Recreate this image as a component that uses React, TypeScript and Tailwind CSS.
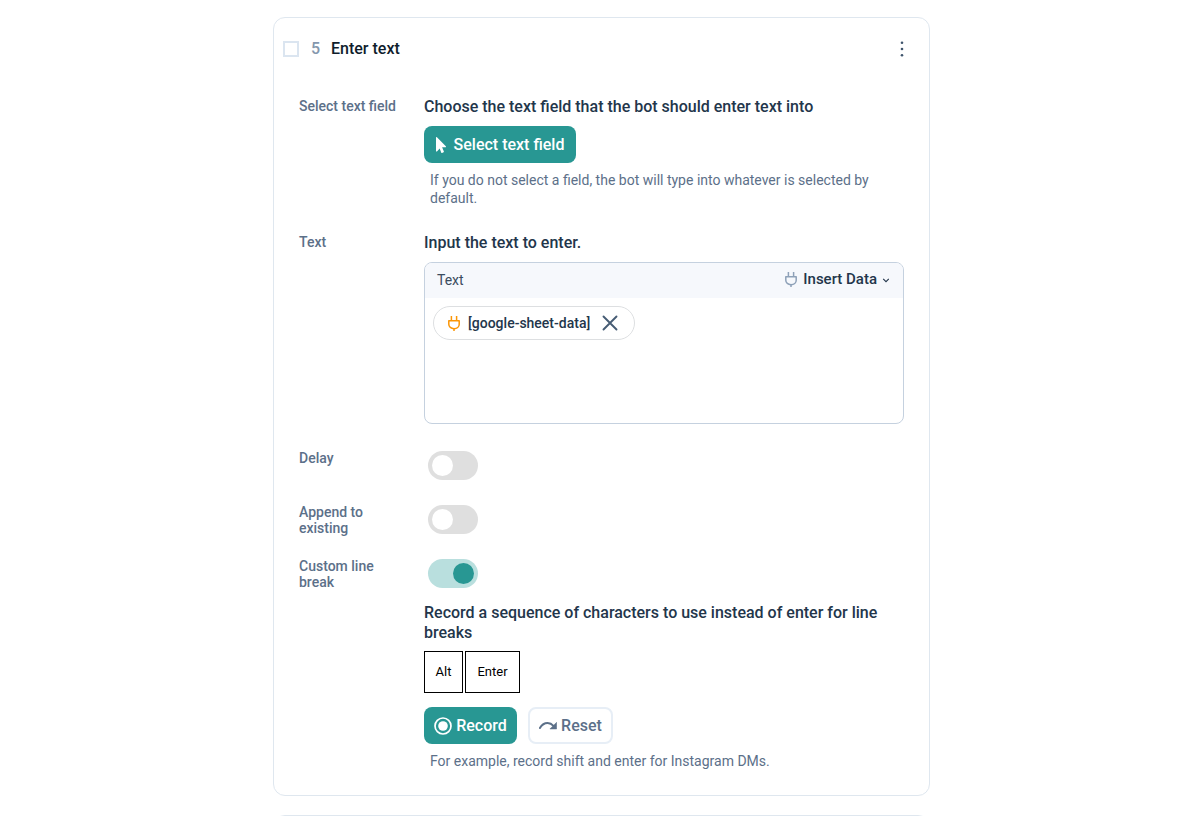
import type { ReactNode } from "react";
import { FaMousePointer } from "react-icons/fa";

function PlugIcon({ className }: { className: string }) {
  return (
    <svg
      className={className}
      width="12"
      height="15"
      viewBox="0 0 12 15"
      fill="none"
      stroke="currentColor"
      strokeWidth="1.5"
      aria-hidden="true"
    >
      <path d="M3.4 0v4.8M8.6 0v4.8" />
      <path d="M.8 4.8h10.4v3.4c0 2.6-2.2 4.5-5.2 4.5S.8 10.8.8 8.2z" strokeLinejoin="round" />
      <path d="M6 12.6V15" />
    </svg>
  );
}

function Row({ label, htmlFor, children }: { label: string; htmlFor: string; children: ReactNode }) {
  return (
    <div className="grid grid-cols-[125px_minmax(0,1fr)]">
      <label htmlFor={htmlFor} className="pt-px pr-5 text-sm leading-4 font-medium text-[#5c7089]">
        {label}
      </label>
      <div>{children}</div>
    </div>
  );
}

function Toggle({ id, on }: { id: string; on?: boolean }) {
  return (
    <div className="flex py-0.5 pl-1">
      <input
        id={id}
        type="checkbox"
        role="switch"
        defaultChecked={on}
        className="h-[29px] w-[50px] appearance-none rounded-full bg-[#dfdfdf] p-1 before:block before:size-[21px] before:rounded-full before:bg-white before:content-[''] checked:bg-[#b9dfde] checked:before:translate-x-[21px] checked:before:bg-[#289793]"
      />
    </div>
  );
}

function Heading({ children }: { children: ReactNode }) {
  return <h3 className="text-base leading-5 font-medium text-[#23364b]">{children}</h3>;
}

export default function App() {
  return (
    <main className="flex h-screen flex-col gap-[19px] overflow-hidden bg-white pt-[17px] pr-4 pl-[19px] font-['Roboto',sans-serif]">
      <section className="mx-auto w-full max-w-[657px] shrink-0 rounded-xl border border-[#dfe7ef] pb-[25px]">
        <header className="flex h-[62px] items-center pr-[18px] pl-[9px]">
          <input
            type="checkbox"
            aria-label="Select step 5"
            className="size-4 appearance-none border-2 border-[#dbe5f0] bg-white checked:bg-[#289793]"
          />
          <span className="ml-3 w-5 text-base font-medium text-[#8497ad]">5</span>
          <h2 className="flex-1 text-base font-medium text-[#0f1d2c]">Enter text</h2>
          <button type="button" aria-label="Step options" className="text-[#3f556d]">
            <svg width="18" height="18" viewBox="0 0 18 18" fill="currentColor" aria-hidden="true">
              <circle cx="9" cy="2.8" r="1.3" />
              <circle cx="9" cy="9" r="1.3" />
              <circle cx="9" cy="15.2" r="1.3" />
            </svg>
          </button>
        </header>

        <form className="mt-[17px] flex flex-col gap-[21px] px-[25px]">
          <Row label="Select text field" htmlFor="select-field">
            <Heading>Choose the text field that the bot should enter text into</Heading>
            <button
              id="select-field"
              type="button"
              className="mt-[9px] flex h-[37px] w-[152px] items-center justify-center gap-2 rounded-lg bg-[#289793] text-base font-medium text-white"
            >
              <FaMousePointer className="h-4 w-[10px]" />
              Select text field
            </button>
            <p className="mt-2 pb-[5px] pl-1.5 text-sm leading-[18px] text-[#5c7089]">
              If you do not select a field, the bot will type into whatever is selected by default.
            </p>
          </Row>

          <Row label="Text" htmlFor="text-value">
            <Heading>Input the text to enter.</Heading>
            <div className="pt-[9px] pb-1">
              <div className="flex h-[162px] flex-col overflow-hidden rounded-lg border border-[#c5d1df]">
                <div className="flex h-[35px] items-center justify-between bg-[#f6f8fc] px-3 pb-0.5">
                  <label htmlFor="text-value" className="text-sm text-[#3b4c5f]">
                    Text
                  </label>
                  <button type="button" className="flex items-center text-[15px] font-medium text-[#23364b]">
                    <PlugIcon className="mr-1.5 text-[#8ea1b8]" />
                    Insert Data
                    <svg
                      className="ml-1"
                      width="10"
                      height="10"
                      viewBox="0 0 10 10"
                      fill="none"
                      stroke="currentColor"
                      aria-hidden="true"
                    >
                      <path d="M2.2 3.8 5 6.6l2.8-2.8" strokeWidth="1.1" />
                    </svg>
                  </button>
                </div>
                <div className="flex flex-1 items-start gap-2 p-2">
                  <span className="flex h-[34px] items-center rounded-full border border-[#dddfe1] px-4 pl-3.5 text-sm font-medium text-[#23364b]">
                    <PlugIcon className="mr-2 text-[#fb9606]" />
                    [google-sheet-data]
                    <button type="button" aria-label="Remove google-sheet-data" className="ml-3 text-[#465c74]">
                      <svg
                        width="16"
                        height="16"
                        viewBox="0 0 16 16"
                        stroke="currentColor"
                        strokeWidth="1.9"
                        strokeLinecap="round"
                        aria-hidden="true"
                      >
                        <path d="M1.500 1.500l13 13M14.500 1.500l-13 13" />
                      </svg>
                    </button>
                  </span>
                  <textarea id="text-value" className="h-full min-w-0 flex-1 resize-none text-sm outline-none" />
                </div>
              </div>
            </div>
          </Row>

          <Row label="Delay" htmlFor="delay">
            <Toggle id="delay" />
          </Row>
          <Row label="Append to existing" htmlFor="append">
            <Toggle id="append" />
          </Row>
          <Row label="Custom line break" htmlFor="line-break">
            <Toggle id="line-break" on />
            <div className="mt-[13px]">
              <Heading>Record a sequence of characters to use instead of enter for line breaks</Heading>
            </div>
            <div className="mt-2 flex gap-0.5 text-[13px] text-black">
              <kbd className="flex h-[42px] w-[39px] items-center justify-center border border-black font-['Roboto',sans-serif]">
                Alt
              </kbd>
              <kbd className="flex h-[42px] w-[55px] items-center justify-center border border-black font-['Roboto',sans-serif]">
                Enter
              </kbd>
            </div>
            <div className="mt-3.5 flex gap-[11px]">
              <button
                type="button"
                className="flex h-[37px] w-[93px] items-center justify-center gap-1 rounded-lg bg-[#289793] text-base font-medium text-white"
              >
                <svg width="18" height="18" viewBox="0 0 18 18" aria-hidden="true">
                  <circle cx="9" cy="9" r="8" fill="none" stroke="currentColor" strokeWidth="1.7" />
                  <circle cx="9" cy="9" r="4.8" fill="currentColor" />
                </svg>
                Record
              </button>
              <button
                type="button"
                className="flex h-[37px] w-[85px] items-center justify-center gap-1 rounded-lg border-2 border-[#e7eef6] bg-white text-base font-medium text-[#5c7089]"
              >
                <svg width="18" height="9" viewBox="0 0 18 9" aria-hidden="true">
                  <path
                    d="M.9 6.900C3 3.400 5.700 1.900 8.600 1.900c2.200 0 4.200 1 5.900 2.900"
                    fill="none"
                    stroke="currentColor"
                    strokeWidth="2"
                    strokeLinecap="round"
                  />
                  <path d="M17.600 1.300V8h-6.700z" fill="currentColor" stroke="currentColor" strokeWidth=".5" strokeLinejoin="round" />
                </svg>
                Reset
              </button>
            </div>
            <p className="mt-2 pl-1.5 text-sm leading-[18px] text-[#5c7089]">
              For example, record shift and enter for Instagram DMs.
            </p>
          </Row>
        </form>
      </section>

      <section className="mx-auto h-16 w-full max-w-[657px] shrink-0 rounded-xl border border-[#dfe7ef]" />
    </main>
  );
}
